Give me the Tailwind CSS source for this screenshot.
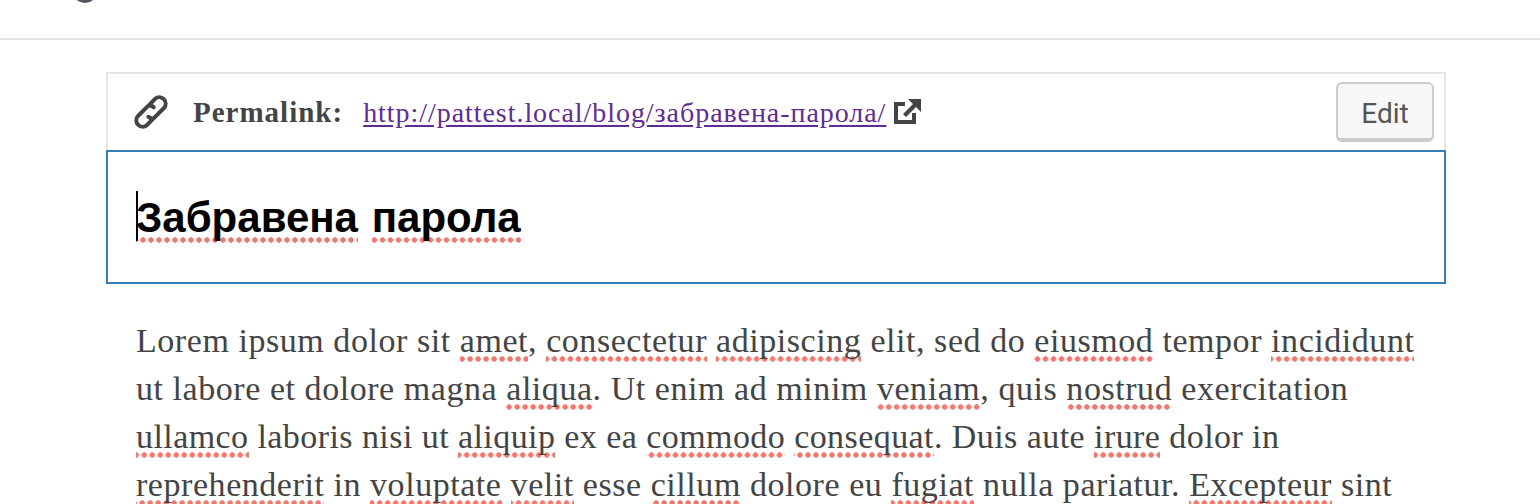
<!DOCTYPE html>
<html lang="en">
<head>
  <meta charset="UTF-8" />
  <title>Edit post</title>
  <script src="https://cdn.jsdelivr.net/npm/@tailwindcss/browser@4"></script>
</head>
<body class="h-[504px] overflow-hidden bg-white font-['Liberation_Serif',serif]">
  <!-- top bar, only the bottom of the avatar is in view -->
  <header class="h-[40px] border-b-2 border-[#e5e5e8] overflow-hidden">
    <div class="ml-[72px] -mt-[23px] w-[26px] h-[26px] rounded-full bg-[#50545c]"></div>
  </header>

  <main class="ml-[106px] w-[1340px] mt-[32px]">
    <!-- permalink row -->
    <div class="h-[78px] border-2 border-b-0 border-[#e5e5e5] flex items-center pl-[25px] pr-[10px]">
      <svg class="w-[36px] h-[36px] shrink-0" viewBox="1 1 34 34" fill="none" stroke="#444" stroke-width="3.8" stroke-linecap="round">
        <path d="M17 10.5 L21.76 5.76 A6 6 0 0 1 30.24 14.24 L20.24 24.24 A6 6 0 0 1 15.5 22.5" />
        <path d="M19 25.5 L14.24 30.24 A6 6 0 0 1 5.76 21.76 L15.76 11.76 A6 6 0 0 1 20.5 13.5" />
      </svg>
      <span class="ml-[24px] pt-[2px] text-[29px] font-bold text-[#444] tracking-[1px]">Permalink:</span>
      <a href="#" class="ml-[20px] pt-[2px] text-[28px] text-[#5f2b94] underline underline-offset-[3px] tracking-[0.95px]">http://pattest.local/blog/забравена-парола/</a>
      <svg class="ml-[7px] w-[28px] h-[28px] shrink-0" viewBox="0 0 28 28" fill="none">
        <path stroke="#444" stroke-width="4" d="M12 6 H3 V24 H21 V15" />
        <path fill="#444" d="M15 1 H28 V14 L23 9 L13 19 L10 16 L20 6 Z" />
      </svg>
      <button class="ml-auto w-[98px] h-[60px] pt-[5px] rounded-[6px] bg-[#f7f7f7] border-2 border-b-[4px] border-[#ccc] text-[28px] text-[#555] font-['Roboto',sans-serif]">Edit</button>
    </div>

    <!-- title -->
    <div class="h-[134px] border-2 border-[#3a7db3] flex items-center pl-[28px]">
      <h1 class="relative font-['Liberation_Sans',sans-serif] font-bold text-[42px] text-black whitespace-nowrap">
        <span class="absolute left-0 top-[5px] w-[2px] h-[50px] bg-black"></span>
        <span class="pb-[2px] bg-[radial-gradient(circle,#f2766e_2.4px,transparent_3px)] bg-[length:8px_6px] bg-repeat-x bg-bottom">Забравена</span>
        <span class="ml-[2px] pb-[2px] bg-[radial-gradient(circle,#f2766e_2.4px,transparent_3px)] bg-[length:8px_6px] bg-repeat-x bg-bottom">парола</span>
      </h1>
    </div>

    <!-- body copy -->
    <p class="mt-[33px] ml-[30px] text-[34px] leading-[48px] text-[#444] whitespace-nowrap tracking-[0.55px]">
      Lorem ipsum dolor sit <span class="pb-[3px] bg-[radial-gradient(circle,#f2766e_2.4px,transparent_3px)] bg-[length:8px_6px] bg-repeat-x bg-bottom">amet</span>, <span class="pb-[3px] bg-[radial-gradient(circle,#f2766e_2.4px,transparent_3px)] bg-[length:8px_6px] bg-repeat-x bg-bottom">consectetur</span> <span class="pb-[3px] bg-[radial-gradient(circle,#f2766e_2.4px,transparent_3px)] bg-[length:8px_6px] bg-repeat-x bg-bottom">adipiscing</span> elit, sed do <span class="pb-[3px] bg-[radial-gradient(circle,#f2766e_2.4px,transparent_3px)] bg-[length:8px_6px] bg-repeat-x bg-bottom">eiusmod</span> tempor <span class="pb-[3px] bg-[radial-gradient(circle,#f2766e_2.4px,transparent_3px)] bg-[length:8px_6px] bg-repeat-x bg-bottom">incididunt</span><br>
      ut labore et dolore magna <span class="pb-[3px] bg-[radial-gradient(circle,#f2766e_2.4px,transparent_3px)] bg-[length:8px_6px] bg-repeat-x bg-bottom">aliqua</span>. Ut enim ad minim <span class="pb-[3px] bg-[radial-gradient(circle,#f2766e_2.4px,transparent_3px)] bg-[length:8px_6px] bg-repeat-x bg-bottom">veniam</span>, quis <span class="pb-[3px] bg-[radial-gradient(circle,#f2766e_2.4px,transparent_3px)] bg-[length:8px_6px] bg-repeat-x bg-bottom">nostrud</span> exercitation<br>
      <span class="tracking-[0.43px]"><span class="pb-[3px] bg-[radial-gradient(circle,#f2766e_2.4px,transparent_3px)] bg-[length:8px_6px] bg-repeat-x bg-bottom">ullamco</span> laboris nisi ut <span class="pb-[3px] bg-[radial-gradient(circle,#f2766e_2.4px,transparent_3px)] bg-[length:8px_6px] bg-repeat-x bg-bottom">aliquip</span> ex ea <span class="pb-[3px] bg-[radial-gradient(circle,#f2766e_2.4px,transparent_3px)] bg-[length:8px_6px] bg-repeat-x bg-bottom">commodo</span> <span class="pb-[3px] bg-[radial-gradient(circle,#f2766e_2.4px,transparent_3px)] bg-[length:8px_6px] bg-repeat-x bg-bottom">consequat</span>. Duis aute <span class="pb-[3px] bg-[radial-gradient(circle,#f2766e_2.4px,transparent_3px)] bg-[length:8px_6px] bg-repeat-x bg-bottom">irure</span> dolor in</span><br>
      <span class="pb-[3px] bg-[radial-gradient(circle,#f2766e_2.4px,transparent_3px)] bg-[length:8px_6px] bg-repeat-x bg-bottom">reprehenderit</span> in <span class="pb-[3px] bg-[radial-gradient(circle,#f2766e_2.4px,transparent_3px)] bg-[length:8px_6px] bg-repeat-x bg-bottom">voluptate</span> <span class="pb-[3px] bg-[radial-gradient(circle,#f2766e_2.4px,transparent_3px)] bg-[length:8px_6px] bg-repeat-x bg-bottom">velit</span> esse <span class="pb-[3px] bg-[radial-gradient(circle,#f2766e_2.4px,transparent_3px)] bg-[length:8px_6px] bg-repeat-x bg-bottom">cillum</span> dolore eu <span class="pb-[3px] bg-[radial-gradient(circle,#f2766e_2.4px,transparent_3px)] bg-[length:8px_6px] bg-repeat-x bg-bottom">fugiat</span> nulla pariatur. <span class="pb-[3px] bg-[radial-gradient(circle,#f2766e_2.4px,transparent_3px)] bg-[length:8px_6px] bg-repeat-x bg-bottom">Excepteur</span> sint
    </p>
  </main>
</body>
</html>
